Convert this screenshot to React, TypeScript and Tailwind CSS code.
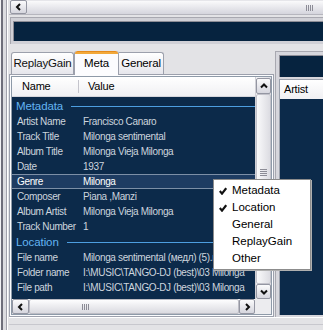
import React from 'react';

type Row = { kind: 'group' | 'item'; name: string; value?: string; selected?: boolean };

const rows: Row[] = [
  { kind: 'group', name: 'Metadata' },
  { kind: 'item', name: 'Artist Name', value: 'Francisco Canaro' },
  { kind: 'item', name: 'Track Title', value: 'Milonga sentimental' },
  { kind: 'item', name: 'Album Title', value: 'Milonga Vieja Milonga' },
  { kind: 'item', name: 'Date', value: '1937' },
  { kind: 'item', name: 'Genre', value: 'Milonga', selected: true },
  { kind: 'item', name: 'Composer', value: 'Piana ,Manzi' },
  { kind: 'item', name: 'Album Artist', value: 'Milonga Vieja Milonga' },
  { kind: 'item', name: 'Track Number', value: '1' },
  { kind: 'group', name: 'Location' },
  { kind: 'item', name: 'File name', value: 'Milonga sentimental (медл) (5).mp3' },
  { kind: 'item', name: 'Folder name', value: 'I:\\MUSIC\\TANGO-DJ (best)\\03 Milonga' },
  { kind: 'item', name: 'File path', value: 'I:\\MUSIC\\TANGO-DJ (best)\\03 Milonga' },
];

const menuItems = [
  { label: 'Metadata', checked: true },
  { label: 'Location', checked: true },
  { label: 'General', checked: false },
  { label: 'ReplayGain', checked: false },
  { label: 'Other', checked: false },
];

const Chevron: React.FC<{ dir: 'left' | 'right' | 'up' | 'down' }> = ({ dir }) => {
  const pts = {
    left: '5,1 2,4 5,7',
    right: '3,1 6,4 3,7',
    up: '1,5.5 4,2.5 7,5.5',
    down: '1,2.5 4,5.5 7,2.5',
  }[dir];
  return (
    <svg width="8" height="8" viewBox="0 0 8 8">
      <polyline points={pts} fill="none" stroke="#111" strokeWidth="2" />
    </svg>
  );
};

const ScrollButton: React.FC<{ dir: 'left' | 'right' | 'up' | 'down'; className?: string }> = ({ dir, className }) => (
  <div
    className={`flex shrink-0 items-center justify-center border border-[#9496a2] rounded-[2px] bg-gradient-to-b from-[#fbfbfc] to-[#d6d6de] ${className ?? ''}`}
  >
    <Chevron dir={dir} />
  </div>
);

const Grip: React.FC<{ vertical?: boolean }> = ({ vertical }) =>
  vertical ? (
    <div className="flex flex-col gap-[1px]">
      {[0, 1, 2, 3].map((i) => (
        <div key={i} className="w-[7px] h-[1px] bg-[#8c8c96]" />
      ))}
    </div>
  ) : (
    <div className="flex gap-[1px]">
      {[0, 1, 2, 3].map((i) => (
        <div key={i} className="w-[1px] h-[6px] bg-[#8c8c96]" />
      ))}
    </div>
  );

export default function App() {
  return (
    <div
      className="relative flex w-[323px] h-[330px] overflow-hidden bg-[#e3e3e6] text-black"
      style={{ fontFamily: '"Liberation Sans", Arial, sans-serif' }}
    >
      {/* left window edge */}
      <div className="flex w-[9px] shrink-0">
        <div className="w-[1px] bg-[#f2f2f4]" />
        <div className="w-[2px] bg-[#6e6e7a]" />
        <div className="w-[3px] bg-[#dcdce0]" />
        <div className="w-[1px] bg-[#a2a2ac]" />
        <div className="w-[1px] bg-white" />
        <div className="w-[1px] bg-[#e3e3e6]" />
      </div>

      <div className="flex flex-col flex-1 min-w-0 h-full overflow-hidden">
        {/* top scrollbar */}
        <div className="flex h-[15px] shrink-0 border-b border-[#b6b6be]">
          <ScrollButton dir="left" className="w-[17px] ml-[1px]" />
          <div className="flex flex-1 items-center justify-end pr-[10px] bg-gradient-to-b from-[#fafafb] to-[#d5d5dd] border-t border-[#e6e6ea]">
            <Grip />
          </div>
        </div>

        {/* top dark field */}
        <div className="mt-[2px] ml-[1px] h-[27px] shrink-0 border-t border-l border-[#a8a8b0] bg-[#d0d0d6] pl-[2px] pt-[3px] pb-[3px]">
          <div className="h-full border-t border-l border-[#8d8d96] bg-[#06233f]" />
        </div>

        {/* tab area */}
        <div className="flex h-[267px] shrink-0 mt-[6px] overflow-hidden">
          <div className="flex flex-col w-[265px] h-full shrink-0">
            {/* tabs */}
            <div className="flex items-end h-[24px] shrink-0 pl-[2px] text-[11.5px] tracking-[-0.2px]">
              <div className="flex items-center justify-center w-[63px] h-[22px] border border-b-0 border-[#9ca0ac] rounded-t-[3px] bg-gradient-to-b from-white to-[#e6e6ec] text-[#111]">
                ReplayGain
              </div>
              <div className="flex flex-col w-[45px] h-[24px] -mb-[1px] border-x border-[#9ca0ac] rounded-t-[3px] bg-[#fcfcfe] relative z-10">
                <div className="h-[3px] rounded-t-[3px] bg-[#f2a93b] border-t border-[#e68b1b]" />
                <div className="flex-1 flex items-start justify-center pt-[1px]">Meta</div>
              </div>
              <div className="flex items-center justify-center w-[45px] h-[22px] border border-b-0 border-l-0 border-[#9ca0ac] rounded-tr-[3px] bg-gradient-to-b from-white to-[#e6e6ec]">
                General
              </div>
            </div>

            {/* tab page */}
            <div className="flex flex-col h-[243px] shrink-0 border border-[#9ca0ac] bg-[#fcfcfe] p-[1px]">
              <div className="flex flex-col h-[239px] border border-[#8e9aa8] overflow-hidden">
                <div className="flex h-[222px] shrink-0 overflow-hidden">
                  {/* list content */}
                  <div className="flex flex-col flex-1 min-w-0 overflow-hidden bg-[#0c2a4a]">
                    <div className="flex items-center h-[20px] shrink-0 bg-gradient-to-b from-white to-[#f0f0f3] border-b border-[#d6d6dc] text-[11px] tracking-[-0.2px] text-black">
                      <div className="w-[66px] pl-[10px]">Name</div>
                      <div className="w-[1px] h-[13px] bg-[#c4c4cc]" />
                      <div className="pl-[9px]">Value</div>
                    </div>
                    <div className="flex flex-col pt-[2px] text-[10px] tracking-[-0.35px]">
                      {rows.map((r, i) =>
                        r.kind === 'group' ? (
                          <div key={i} className={`flex items-center h-[15px] shrink-0 pl-[4px] ${i > 0 ? 'mt-[1px]' : ''}`}>
                            <span className="text-[11.5px] tracking-[-0.1px] text-[#63b4f2]">{r.name}</span>
                            <div className="flex-1 h-[1px] ml-[8px] bg-[#4d9ee0]" />
                          </div>
                        ) : (
                          <div
                            key={i}
                            className={`flex items-center h-[15px] shrink-0 whitespace-nowrap ${
                              r.selected
                                ? 'bg-[#1e3c62] border-y border-[#7d8fa6] text-white'
                                : 'text-[#cdd5de]'
                            }`}
                          >
                            <div className="w-[71px] pl-[5px] shrink-0">{r.name}</div>
                            <div>{r.value}</div>
                          </div>
                        )
                      )}
                    </div>
                  </div>
                  {/* vertical scrollbar */}
                  <div className="flex flex-col w-[16px] shrink-0 bg-gradient-to-r from-[#f3f3f5] to-[#dedee4] border-l border-[#d0d0d6]">
                    <ScrollButton dir="up" className="h-[16px] mt-[1px]" />
                    <div className="flex flex-1 flex-col border border-[#c2c2ca] rounded-[2px] bg-gradient-to-r from-[#fafafb] to-[#dcdce2]">
                      <div className="h-[74px]" />
                      <div className="flex justify-center">
                        <Grip vertical />
                      </div>
                    </div>
                    <ScrollButton dir="down" className="h-[15px]" />
                  </div>
                </div>
                {/* horizontal scrollbar */}
                <div className="flex h-[15px] shrink-0">
                  <div className="flex flex-1 bg-gradient-to-b from-[#f7f7f9] to-[#dcdce2]">
                    <ScrollButton dir="left" className="w-[17px]" />
                    <div className="flex flex-1 items-center border border-[#bcbcc4] rounded-[2px] bg-gradient-to-b from-[#fdfdfe] to-[#dadae0]">
                      <div className="w-[52px]" />
                      <Grip />
                    </div>
                    <ScrollButton dir="right" className="w-[16px]" />
                  </div>
                  <div className="w-[16px] bg-[#ececef]" />
                </div>
              </div>
            </div>
          </div>

          {/* right panel */}
          <div className="flex flex-col flex-1 pt-[1px] pl-[1px]">
            <div className="flex flex-col flex-1 border-t border-l border-[#a8a8b0] bg-[#d6d6dc] pl-[3px] pt-[3px]">
              <div className="h-[22px] shrink-0 border-t border-l border-[#8d8d96] bg-[#06233f]" />
              <div className="flex flex-col flex-1 mt-[2px] mb-[2px] border-t border-l border-[#9aa0ac] bg-[#0c2a4a]">
                <div className="flex items-center h-[19px] pl-[4px] bg-gradient-to-b from-white to-[#f0f0f3] text-[11px] tracking-[-0.2px]">
                  Artist
                </div>
              </div>
            </div>
          </div>
        </div>

        {/* bottom strip */}
        <div className="h-[13px] shrink-0 border-t border-white">
          <div className="mt-[6px] h-[1px] bg-[#c8c8ce]" />
        </div>
      </div>

      {/* context menu */}
      <div className="absolute left-[213px] top-[179px] w-[98px] h-[91px] border border-[#8c8c8c] bg-white shadow-[1px_1px_0_#b0b0b0] pt-[2px] text-[11.5px]">
        {menuItems.map((m) => (
          <div key={m.label} className="flex items-center h-[17px]">
            <div className="w-[18px] flex justify-end pr-[5px]">
              {m.checked && (
                <svg width="8" height="8" viewBox="0 0 8 8">
                  <polyline points="0.8,4 3,6.6 7.2,1.2" fill="none" stroke="#111" strokeWidth="2.2" />
                </svg>
              )}
            </div>
            <span>{m.label}</span>
          </div>
        ))}
      </div>
    </div>
  );
}
